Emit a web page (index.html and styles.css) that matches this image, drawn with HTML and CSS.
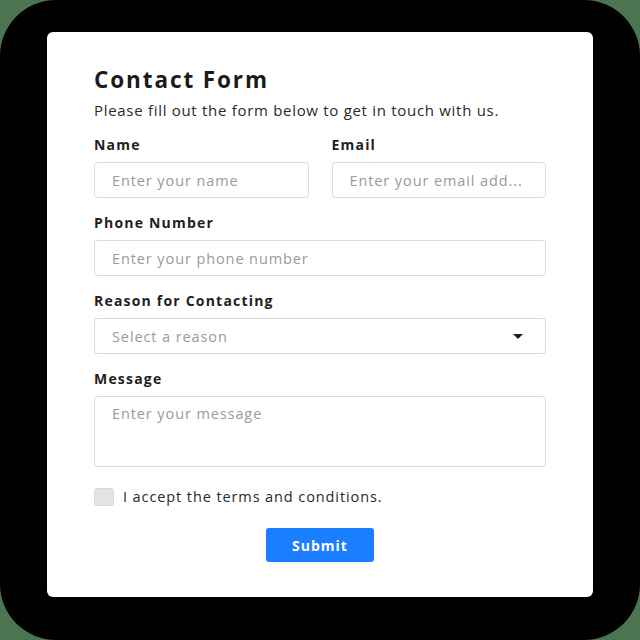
FILE: index.html
```html
<!DOCTYPE html>
<html lang="en">
<head>
<meta charset="utf-8">
<title>Contact Form</title>
<link rel="stylesheet" href="styles.css">
</head>
<body>
<div class="frame">
  <form class="card">
    <h1 class="title">Contact Form</h1>
    <p class="subtitle">Please fill out the form below to get in touch with us.</p>
    <div class="row">
      <div class="group">
        <label class="label">Name</label>
        <div class="input"><span class="ph">Enter your name</span></div>
      </div>
      <div class="group">
        <label class="label">Email</label>
        <div class="input"><span class="ph">Enter your email add...</span></div>
      </div>
    </div>
    <div class="group">
      <label class="label">Phone Number</label>
      <div class="input"><span class="ph">Enter your phone number</span></div>
    </div>
    <div class="group">
      <label class="label">Reason for Contacting</label>
      <div class="input select"><span class="ph">Select a reason</span><span class="caret"></span></div>
    </div>
    <div class="group">
      <label class="label">Message</label>
      <div class="input textarea"><span class="ph">Enter your message</span></div>
    </div>
    <div class="check-row">
      <span class="checkbox"></span>
      <span class="check-text">I accept the terms and conditions.</span>
    </div>
    <div class="actions">
      <button type="button" class="submit">Submit</button>
    </div>
  </form>
</div>
</body>
</html>
```
FILE: styles.css
```css
* { box-sizing: border-box; }
html, body { margin: 0; padding: 0; }
body {
  width: 640px;
  height: 640px;
  background: #4a7550;
  font-family: "Open Sans", "Noto Sans", sans-serif;
}
.frame {
  width: 640px;
  height: 640px;
  background: #000;
  border-radius: 56px;
  padding: 32px 47px 43px 47px;
}
.card {
  background: #fff;
  border-radius: 6px;
  height: 565px;
  padding: 34px 47px 35px 47px;
  display: flex;
  flex-direction: column;
}
.title {
  margin: 0;
  font-size: 22.5px;
  line-height: 28px;
  font-weight: 700;
  letter-spacing: 1.9px;
  color: #1b1b1b;
}
.subtitle {
  margin: 6px 0 16px 0;
  font-size: 15px;
  line-height: 20px;
  letter-spacing: 0.7px;
  color: #2a2a2a;
}
.row {
  display: grid;
  grid-template-columns: 1fr 1fr;
  column-gap: 23px;
}
.group {
  display: flex;
  flex-direction: column;
  margin-bottom: 16px;
}
.label {
  font-size: 14px;
  line-height: 18px;
  font-weight: 700;
  letter-spacing: 1.2px;
  color: #1e1e1e;
  margin-bottom: 8px;
}
.input {
  height: 36px;
  border: 1px solid #dcdcdc;
  border-radius: 3px;
  padding: 0 17px;
  display: flex;
  align-items: center;
  font-size: 14.5px;
  letter-spacing: 0.9px;
  overflow: hidden;
}
.ph { color: #9a9a9a; white-space: nowrap; }
.select { justify-content: space-between; padding-right: 22px; }
.caret {
  width: 0;
  height: 0;
  border-left: 5px solid transparent;
  border-right: 5px solid transparent;
  border-top: 5px solid #1a1a1a;
}
.textarea {
  height: 71px;
  align-items: flex-start;
  padding-top: 7px;
}
.check-row {
  display: flex;
  align-items: center;
  gap: 9px;
  margin-top: 4px;
}
.checkbox {
  width: 20px;
  height: 18px;
  border-radius: 3px;
  background: #e3e3e3;
  border: 1px solid #d8d8d8;
}
.check-text {
  font-size: 14.5px;
  letter-spacing: 0.9px;
  color: #2a2a2a;
}
.actions {
  display: flex;
  justify-content: center;
  margin-top: 22px;
}
.submit {
  width: 108px;
  height: 34px;
  border: none;
  border-radius: 3px;
  background: #1b7dff;
  color: #fff;
  font-family: inherit;
  font-size: 14px;
  font-weight: 700;
  letter-spacing: 1px;
}
```
